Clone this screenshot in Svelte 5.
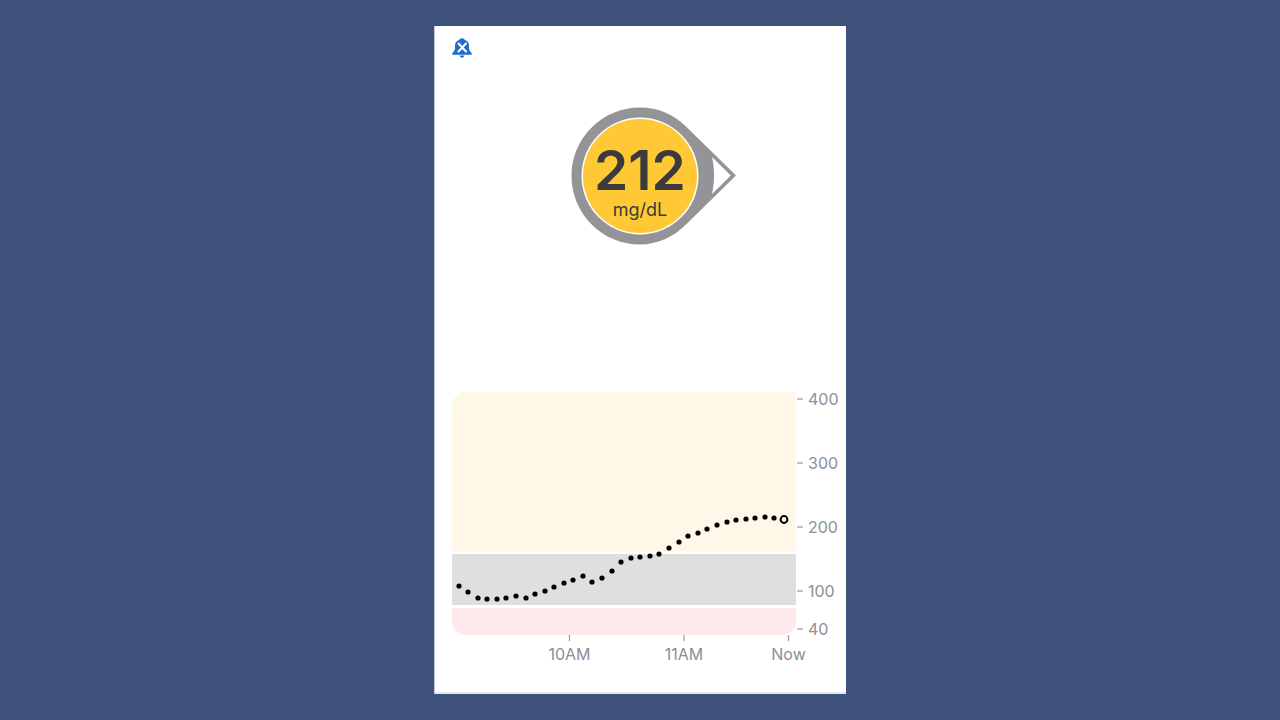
<script>
    // glucose readings, in chart coordinates (x from the left of the bands, y from their top)
    const readings = [
        [7, 194], [16, 200], [26, 206], [35, 207], [45, 207], [54, 206], [64, 204], [74, 206],
        [83, 202], [93, 199], [102, 195], [112, 191], [121, 188], [131, 184], [140, 190], [150, 186],
        [160, 179], [169, 170], [179, 166], [188, 165], [198, 164], [207, 162], [217, 156], [227, 150],
        [236, 144], [246, 141], [255, 137], [265, 133], [275, 130], [284, 128], [294, 127], [303, 126],
        [313, 125], [322, 126]
    ];
    const yTicks = [
        { label: "400", y: 7 },
        { label: "300", y: 71 },
        { label: "200", y: 135 },
        { label: "100", y: 199 },
        { label: "40", y: 237 }
    ];
    const xTicks = [
        { label: "10AM", x: 117.5 },
        { label: "11AM", x: 232 },
        { label: "Now", x: 336.5 }
    ];
</script>

<main class="screen">
    <section class="card">
        <header class="top">
            <svg class="bell" width="20" height="20" viewBox="0 0 20 20" aria-label="alarms off">
                <path d="M10 .3C11.500 .3 12.300 1 12.800 2 15.500 2.600 17 4.600 17 7.500V10C17 12 18 13.500 19.500 14.700L19.800 16.800H.2L.5 14.700C2 13.500 3 12 3 10V7.500C3 4.600 4.500 2.600 7.200 2 7.700 1 8.500 .3 10 .3z" fill="#1f6dcb"/>
                <path d="M7.600 17.500h4.800c-.3 1.300-1.200 2.200-2.400 2.200s-2.100-.9-2.400-2.200z" fill="#1f6dcb"/>
                <path d="M6.500 5.500 14 13.500M14 5.500 6.500 13.500" stroke="#fff" stroke-width="2" stroke-linecap="round"/>
            </svg>
        </header>

        <div class="gauge">
            <svg width="170" height="140" viewBox="0 0 170 140">
                <path d="M70 1.500C88 1.500 104 8.500 116 20.500L166 69.500 116 118.500C104 130.500 88 138.500 70 138.500 32 138.500 1.500 107.500 1.500 70S32 1.500 70 1.500z" fill="#949397"/>
                <path d="M142 51 160.800 69.500 142 88C144.800 76 144.800 63 142 51z" fill="#fff"/>
                <circle cx="70" cy="70" r="58.500" fill="#fff"/>
                <circle cx="70" cy="70" r="57" fill="#fec935"/>
            </svg>
            <div class="readout">
                <span class="value">212</span>
                <span class="unit">mg/dL</span>
            </div>
        </div>

        <svg class="chart" width="393" height="284" viewBox="0 -4 393 284">
            <path d="M0 159.500V14A14 14 0 0 1 14 0H344V159.500z" fill="#fff7e8"/>
            <rect x="0" y="162" width="344" height="51" fill="#dfdfdf"/>
            <path d="M0 216H344V229A14 14 0 0 1 330 243H14A14 14 0 0 1 0 229z" fill="#ffe9ea"/>

            {#each yTicks as t}
                <line x1="345" x2="351" y1={t.y} y2={t.y} class="tick"/>
                <text class="axis" x="356" y={t.y + 6}>{t.label}</text>
            {/each}
            {#each xTicks as t}
                <line x1={t.x} x2={t.x} y1="243" y2="249" class="tick"/>
                <text class="axis" x={t.x} y="268" text-anchor="middle">{t.label}</text>
            {/each}

            {#each readings as [x, y]}
                <circle cx={x} cy={y} r="2.600" fill="#000"/>
            {/each}
            <circle cx="332" cy="127.500" r="3.400" fill="#fff" stroke="#000" stroke-width="2"/>
        </svg>
    </section>
</main>

<style>
    :global(body) {
        background: #3f527c;
    }

    .screen {
        height: 720px;
        display: flex;
        justify-content: center;
        align-items: flex-start;
        padding-top: 26px;
        box-sizing: border-box;
        font-family: Inter, "Liberation Sans", sans-serif;
    }

    .card {
        width: 411px;
        height: 668px;
        box-sizing: border-box;
        background: #fff;
        border-bottom: 2px solid #e6e7ea;
        box-shadow: -1px 0 0 #c5cad6;
        padding: 12px 0 0 17.5px;
        display: flex;
        flex-direction: column;
    }

    .top {
        height: 20px;
    }

    .bell {
        display: block;
    }

    .gauge {
        position: relative;
        margin: 48px 0 0 118px;
        width: 170px;
        height: 146px;
    }

    .gauge svg {
        display: block;
    }

    .readout {
        position: absolute;
        top: 41px;
        left: 0;
        width: 140px;
        display: flex;
        flex-direction: column;
        align-items: center;
        color: #3b3b3d;
    }

    .value {
        font-size: 55px;
        font-weight: 600;
        line-height: 46px;
    }

    .unit {
        font-size: 18px;
        line-height: 22px;
        margin-top: 6px;
    }

    .chart {
        display: block;
        margin-top: 136px;
    }

    .tick {
        stroke: #9a9a9e;
        stroke-width: 1.2;
    }

    .axis {
        font-size: 16px;
        fill: #8e8e93;
    }
</style>
